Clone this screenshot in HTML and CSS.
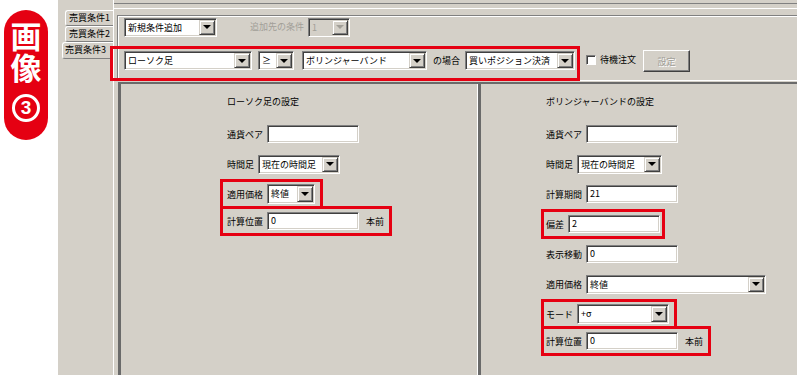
FILE: index.html
```html
<!DOCTYPE html>
<html lang="ja">
<head>
    <meta charset="UTF-8">
    <meta name="viewport" content="width=device-width, initial-scale=1.0">
    <title>売買条件</title>
    <link rel="stylesheet" href="styles.css">
</head>
<body>
    <div class="page">
        <div class="badge">
            <span class="badge-text">画像</span>
            <span class="badge-num">3</span>
        </div>

        <div class="window">
            <div class="tabs">
                <div class="tab">売買条件1</div>
                <div class="tab">売買条件2</div>
                <div class="tab active">売買条件3</div>
            </div>

            <div class="tabpage">
                <div class="topline"></div>

                <div class="top-panel">
                    <div class="row-add">
                        <div class="combo w-add"><span class="combo-text">新規条件追加</span><span class="combo-btn"></span></div>
                        <span class="disabled-label">追加先の条件</span>
                        <div class="combo combo-disabled w-target"><span class="combo-text">1</span><span class="combo-btn"></span></div>
                    </div>

                    <div class="row-cond">
                        <div class="hl-cond">
                            <div class="combo w-candle"><span class="combo-text">ローソク足</span><span class="combo-btn"></span></div>
                            <div class="combo w-op"><span class="combo-text">≥</span><span class="combo-btn"></span></div>
                            <div class="combo w-indicator"><span class="combo-text">ボリンジャーバンド</span><span class="combo-btn"></span></div>
                            <span class="cond-label">の場合</span>
                            <div class="combo w-action"><span class="combo-text">買いポジション決済</span><span class="combo-btn"></span></div>
                        </div>
                        <span class="checkbox"></span>
                        <span class="check-label">待機注文</span>
                        <button class="btn" disabled>設定</button>
                    </div>
                </div>

                <div class="columns">
                    <div class="col col-left">
                        <div class="col-title">ローソク足の設定</div>
                        <div class="field">
                            <span class="label">通貨ペア</span>
                            <div class="input w-pair"></div>
                        </div>
                        <div class="field">
                            <span class="label">時間足</span>
                            <div class="combo w-tf"><span class="combo-text">現在の時間足</span><span class="combo-btn"></span></div>
                        </div>
                        <div class="field hl">
                            <span class="label">適用価格</span>
                            <div class="combo w-price-s"><span class="combo-text">終値</span><span class="combo-btn"></span></div>
                        </div>
                        <div class="field hl">
                            <span class="label">計算位置</span>
                            <div class="input w-pair">0</div>
                            <span class="unit">本前</span>
                        </div>
                    </div>

                    <div class="col col-right">
                        <div class="col-title">ボリンジャーバンドの設定</div>
                        <div class="field">
                            <span class="label">通貨ペア</span>
                            <div class="input w-pair"></div>
                        </div>
                        <div class="field">
                            <span class="label">時間足</span>
                            <div class="combo w-tf2"><span class="combo-text">現在の時間足</span><span class="combo-btn"></span></div>
                        </div>
                        <div class="field">
                            <span class="label">計算期間</span>
                            <div class="input w-pair">21</div>
                        </div>
                        <div class="field hl hl-tight">
                            <span class="label">偏差</span>
                            <div class="input w-pair">2</div>
                        </div>
                        <div class="field">
                            <span class="label">表示移動</span>
                            <div class="input w-pair">0</div>
                        </div>
                        <div class="field">
                            <span class="label">適用価格</span>
                            <div class="combo w-price-l"><span class="combo-text">終値</span><span class="combo-btn"></span></div>
                        </div>
                        <div class="field hl">
                            <span class="label">モード</span>
                            <div class="combo w-mode"><span class="combo-text">+σ</span><span class="combo-btn"></span></div>
                        </div>
                        <div class="field hl">
                            <span class="label">計算位置</span>
                            <div class="input w-pair">0</div>
                            <span class="unit">本前</span>
                        </div>
                    </div>
                </div>
            </div>
        </div>
    </div>
</body>
</html>
```

FILE: styles.css
```css
body {
    margin: 0;
    background-color: #fff;
    font-family: "Noto Sans CJK JP", "Noto Sans", sans-serif;
    font-size: 9px;
    color: #000;
}

.page {
    display: flex;
    width: 800px;
    height: 378px;
}

/* red label on the left */
.badge {
    margin: 10px 0 0 4px;
    width: 44px;
    height: 130px;
    box-sizing: border-box;
    padding-top: 11px;
    border-radius: 22px;
    background-color: #e50012;
    color: #fff;
    display: flex;
    flex-direction: column;
    align-items: center;
}

.badge-text {
    writing-mode: vertical-rl;
    font-size: 31px;
    font-weight: 700;
    letter-spacing: 1px;
    line-height: 31px;
}

.badge-num {
    margin-top: 9px;
    width: 28px;
    height: 28px;
    box-sizing: border-box;
    border: 3px solid #fff;
    border-radius: 50%;
    text-align: center;
    font: 700 19px/22px "Liberation Sans", sans-serif;
}

/* the dialog */
.window {
    margin-left: 10px;
    width: 739px;
    height: 375px;
    background-color: #d4d0c8;
    display: flex;
}

.tabs {
    width: 55px;
    padding-top: 10px;
    box-sizing: border-box;
    display: flex;
    flex-direction: column;
    align-items: flex-end;
}

.tab {
    width: 48px;
    height: 16px;
    box-sizing: border-box;
    padding-left: 3px;
    border: 1px solid #fff;
    border-right: none;
    border-bottom-color: #808080;
    border-radius: 3px 0 0 3px;
    line-height: 14px;
    white-space: nowrap;
}

.tab.active {
    width: 51px;
    height: 17px;
    padding-left: 2px;
}

.tabpage {
    flex: 1;
    border-left: 1px solid #fff;
    padding-top: 3px;
    display: flex;
    flex-direction: column;
}

.topline {
    height: 4px;
    border-top: 1px solid #808080;
    border-bottom: 1px solid #fff;
}

.top-panel {
    margin: 6px 0 0 3px;
    height: 66px;
    box-sizing: border-box;
    padding: 2px 0 0 6px;
    border-top: 1px solid #808080;
    border-left: 1px solid #808080;
    border-bottom: 1px solid #fff;
    box-shadow: inset 1px 1px #fff;
}

.row-add {
    display: flex;
    align-items: center;
    height: 18px;
}

.disabled-label {
    margin: 0 4px 0 33px;
    color: #a29f98;
    line-height: 14px;
}

.row-cond {
    display: flex;
    align-items: flex-start;
    margin: 10px 0 0 -14px;
}

.hl-cond {
    display: flex;
    align-items: center;
    gap: 6px;
    height: 35px;
    box-sizing: border-box;
    padding: 0 2px 6px 11px;
    border: 3px solid #e60012;
}

.cond-label {
    margin-right: -1px;
    line-height: 14px;
}

.checkbox {
    margin: 9px 0 0 6px;
    width: 10px;
    height: 10px;
    box-sizing: border-box;
    background-color: #fff;
    border: 1px solid;
    border-color: #808080 #fff #fff #808080;
    box-shadow: inset 1px 1px #404040;
}

.check-label {
    margin: 7px 0 0 4px;
    line-height: 14px;
}

.btn {
    margin: 4px 0 0 7px;
    width: 47px;
    height: 22px;
    padding: 0;
    background-color: #d4d0c8;
    border: 1px solid;
    border-color: #fff #404040 #404040 #fff;
    box-shadow: inset -1px -1px #808080;
    font: inherit;
    color: #a29f98;
    text-shadow: 1px 1px #fff;
}

/* form controls */
.combo,
.input {
    height: 19px;
    box-sizing: border-box;
    background-color: #fff;
    border: 1px solid;
    border-color: #808080 #fff #fff #808080;
    box-shadow: inset 1px 1px #404040, inset -1px -1px #d4d0c8;
}

.combo {
    display: flex;
    padding: 1px;
}

.combo-text {
    flex: 1;
    padding-left: 2px;
    line-height: 15px;
    white-space: nowrap;
    overflow: hidden;
}

.combo-btn {
    width: 16px;
    box-sizing: border-box;
    background-color: #d4d0c8;
    border: 1px solid;
    border-color: #d4d0c8 #404040 #404040 #d4d0c8;
    box-shadow: inset 1px 1px #fff, inset -1px -1px #808080;
    display: flex;
    align-items: center;
    justify-content: center;
}

.combo-btn::after {
    content: "";
    border-left: 4px solid transparent;
    border-right: 4px solid transparent;
    border-top: 4px solid #000;
}

.combo-disabled {
    background-color: #d4d0c8;
    color: #a29f98;
}

.combo-disabled .combo-btn::after {
    border-top-color: #a29f98;
}

.input {
    height: 18px;
    padding-left: 3px;
    line-height: 15px;
}

.w-add { width: 93px; }
.w-target { width: 42px; }
.w-candle { width: 128px; }
.w-op { width: 36px; }
.w-indicator { width: 125px; margin-left: 2px; }
.w-action { width: 110px; }
.w-pair { width: 92px; }
.w-tf { width: 82px; }
.w-tf2 { width: 85px; }
.w-price-s { width: 48px; height: 20px; }
.w-price-l { width: 180px; }
.w-mode { width: 92px; height: 20px; }

/* two settings columns */
.columns {
    flex: 1;
    display: flex;
    margin: 1px 0 0 4px;
    border-top: 2px solid #6a6a6a;
}

.col {
    box-sizing: border-box;
    border-left: 3px solid #6a6a6a;
}

.col-left {
    width: 360px;
    padding-left: 106px;
}

.col-right {
    flex: 1;
    padding-left: 65px;
    box-shadow: -1px 0 #fff;
}

.col-title {
    padding-top: 11px;
    margin-bottom: 10px;
    line-height: 14px;
}

.field {
    display: flex;
    align-items: center;
    height: 30px;
    box-sizing: border-box;
}

.label {
    margin-right: 4px;
    white-space: nowrap;
}

.unit {
    margin-left: 7px;
}

.hl {
    width: fit-content;
    margin-left: -7px;
    padding: 0 5px 0 4px;
    border: 3px solid #e60012;
}

.hl + .hl {
    margin-top: -3px;
}

.col-right .hl {
    margin-left: -5px;
    padding-left: 2px;
}

.col-right .hl-tight {
    padding-right: 2px;
}
```
